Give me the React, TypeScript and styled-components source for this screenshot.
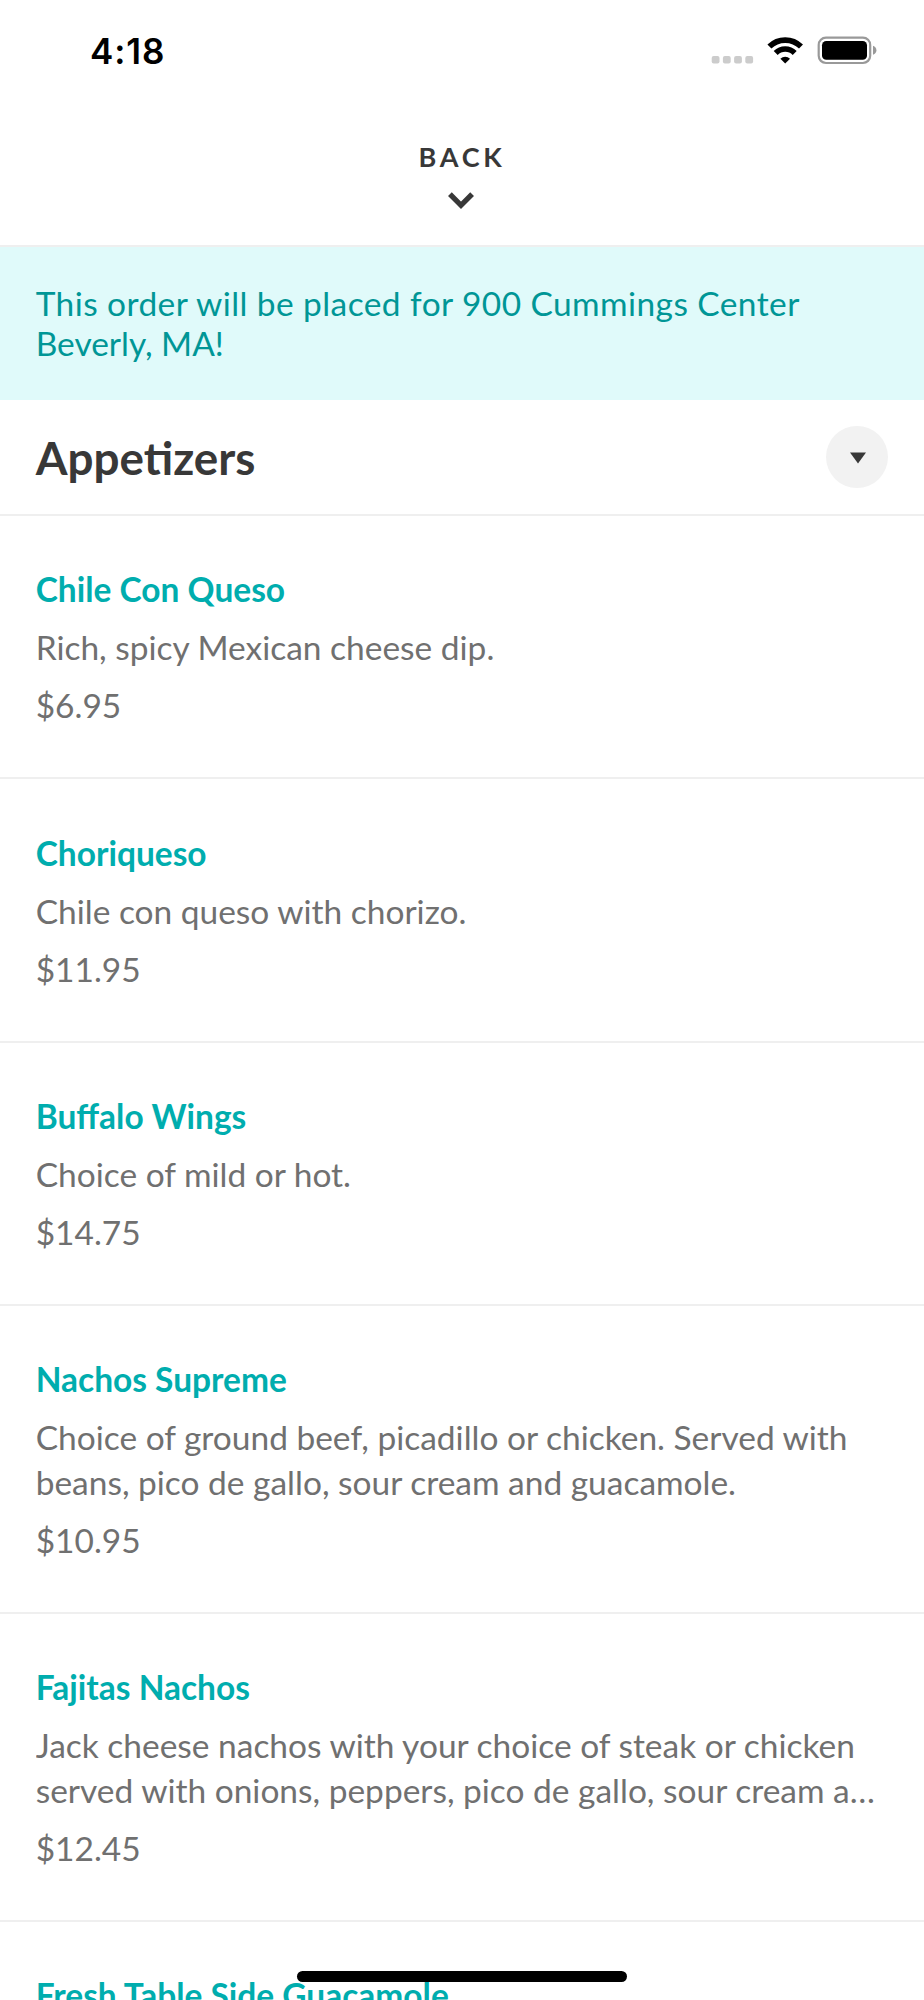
import React from "react";
import styled, { createGlobalStyle } from "styled-components";

const Global = createGlobalStyle`
  *{box-sizing:border-box}
  body{margin:0;background:#fff;font-family:Lato,sans-serif;overflow:hidden}
  h1,h2,p{margin:0}
`;
const Screen = styled.main`position:relative;width:924px;height:2000px;overflow:hidden;background:#fff;`;
const StatusBar = styled.header`height:100px;display:flex;justify-content:space-between;padding:30px 46px 0 90px;`;
const Time = styled.time`font:600 35px/42px Inter,sans-serif;color:#000;letter-spacing:.9px;`;
const StatusIcons = styled.svg`width:168px;height:40px;`;
const Back = styled.button`display:flex;flex-direction:column;align-items:center;width:100%;height:147px;border:0;border-bottom:2px solid #efefef;background:#fff;padding:40px 0 0 0;font:700 27px/34px Lato,sans-serif;color:#383838;`;
const BackLabel = styled.span`letter-spacing:3.7px;`;
const Chevron = styled.svg`width:28px;height:20px;margin:17px 2px 0 0;`;
const Notice = styled.p`height:153px;background:#e0fafa;color:#009696;padding:36px 35.7px;font-size:33.48px;line-height:40.2px;`;
const Address = styled.span`display:block;letter-spacing:.43px;`;
const Heading = styled.div`height:116px;display:flex;align-items:center;justify-content:space-between;padding:0 35.7px;border-bottom:2px solid #efefef;`;
const Title = styled.h1`font-size:45.8px;line-height:54px;color:#383838;padding-top:1px;`;
const Toggle = styled.button`width:62.5px;height:62.5px;border:0;border-radius:50%;background:#f2f2f2;display:grid;place-items:center;padding:2px 0 0 2px;`;
const Item = styled.article`border-bottom:2px solid #efefef;padding:51.2px 35.7px 49.5px;`;
const Name = styled.h2`font-size:33.48px;line-height:44.64px;color:#00adae;`;
const Description = styled.p`font-size:33.48px;line-height:44.64px;color:#707070;margin-top:13.4px;display:-webkit-box;-webkit-line-clamp:2;-webkit-box-orient:vertical;overflow:hidden;`;
const Price = styled.p`font-size:33.48px;line-height:44.64px;color:#707070;margin-top:13.4px;`;
const HomeIndicator = styled.div`position:absolute;left:297px;top:1971px;width:330px;height:11px;border-radius:6px;background:#000;`;

const items = [
  { name: "Chile Con Queso", description: "Rich, spicy Mexican cheese dip.", price: "$6.95" },
  { name: "Choriqueso", description: "Chile con queso with chorizo.", price: "$11.95" },
  { name: "Buffalo Wings", description: "Choice of mild or hot.", price: "$14.75" },
  { name: "Nachos Supreme", description: "Choice of ground beef, picadillo or chicken. Served with beans, pico de gallo, sour cream and guacamole.", price: "$10.95" },
  { name: "Fajitas Nachos", description: "Jack cheese nachos with your choice of steak or chicken served with onions, peppers, pico de gallo, sour cream and guacamole.", price: "$12.45" },
  { name: "Fresh Table Side Guacamole" },
];

function DeviceStatus() {
  return (
    <StatusIcons viewBox="0 0 168 40" aria-label="Wi-Fi connected, battery full">
      {[1.7, 12.9, 24.1, 35.3].map((x) => <rect key={x} x={x} y="26" width="7.8" height="7.5" rx="2" fill="#ccc" />)}
      <g fill="none" stroke="#000" strokeWidth="5.6">
        <path d="M59.4 16.6A22.4 22.4 0 0 1 91 16.6" />
        <path d="M65.7 23A13.4 13.4 0 0 1 84.7 23" />
      </g>
      <path d="M75.2 33.6L70.4 28.7A7 7 0 0 1 80 28.7Z" fill="#000" />
      <rect x="108.7" y="7.6" width="51.5" height="25.4" rx="7.3" fill="none" stroke="#999" strokeWidth="2.2" />
      <rect x="112" y="11" width="45" height="18.7" rx="4.3" fill="#000" />
      <path d="M163 15.8C165.2 16.7 166.4 18.3 166.4 20.3S165.2 23.9 163 24.8Z" fill="#999" />
    </StatusIcons>
  );
}

export default function App() {
  return (
    <>
      <Global />
      <Screen>
        <StatusBar><Time>4:18</Time><DeviceStatus /></StatusBar>
        <Back>
          <BackLabel>BACK</BackLabel>
          <Chevron viewBox="0 0 28 20"><path d="M2.9 3.2L14 14.3L25.1 3.2" fill="none" stroke="#383838" strokeWidth="5.3" /></Chevron>
        </Back>
        <Notice><Address>This order will be placed for 900 Cummings Center</Address>Beverly, MA!</Notice>
        <Heading>
          <Title>Appetizers</Title>
          <Toggle aria-label="Choose category"><svg width="16" height="12"><path d="M0 .5H16L8 11.5Z" fill="#383838" /></svg></Toggle>
        </Heading>
        {items.map(({ name, description, price }) => (
          <Item key={name}>
            <Name>{name}</Name>
            {description && <Description>{description}</Description>}
            {price && <Price>{price}</Price>}
          </Item>
        ))}
        <HomeIndicator />
      </Screen>
    </>
  );
}
